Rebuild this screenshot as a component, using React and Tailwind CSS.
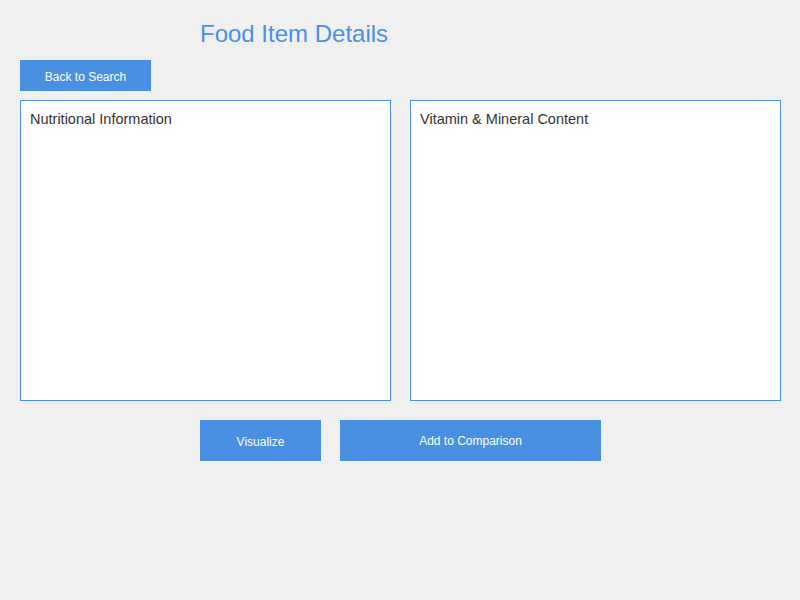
import React from "react";

function Panel({ title }) {
  return (
    <div className="w-[371px] h-[301px] shrink-0 bg-white border border-[#4a90e2] px-[9px] py-[9px]">
      <h2 className="text-[14.5px] leading-[18px] text-[#333333]">{title}</h2>
    </div>
  );
}

export default function App() {
  return (
    <div className="w-[800px] h-[600px] bg-[#f0f0f0] pl-5 pr-[19px] font-['Liberation_Sans',Arial,sans-serif]">
      <h1 className="pt-[20px] pl-[180px] text-[24px] leading-[28px] text-[#4a90e2]">Food Item Details</h1>
      <button className="mt-[12px] w-[131px] h-[31px] bg-[#4a90e2] text-white text-[12px] pt-[2px]">Back to Search</button>
      <div className="mt-[9px] flex gap-[19px]">
        <Panel title="Nutritional Information" />
        <Panel title="Vitamin & Mineral Content" />
      </div>
      <div className="mt-[19px] pl-[180px] flex gap-[19px]">
        <button className="w-[121px] h-[41px] bg-[#4a90e2] text-white text-[12px] pt-[2px]">Visualize</button>
        <button className="w-[261px] h-[41px] bg-[#4a90e2] text-white text-[12px]">Add to Comparison</button>
      </div>
    </div>
  );
}
